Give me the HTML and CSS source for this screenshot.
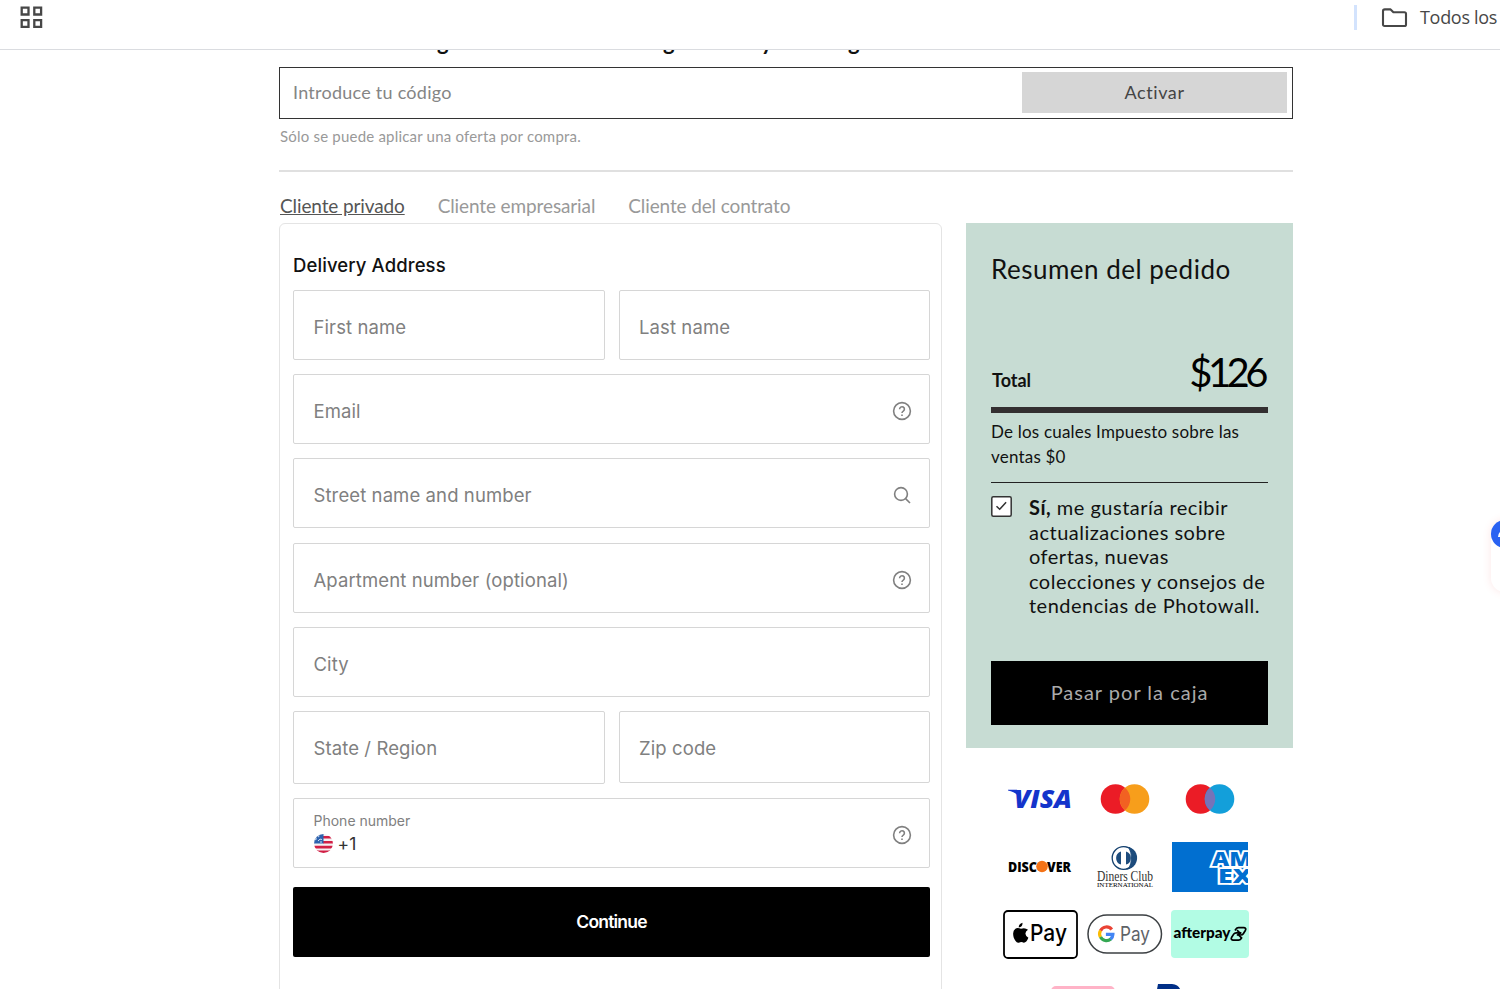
FILE: index.html
```html
<!DOCTYPE html>
<html lang="es">
<head>
    <meta charset="UTF-8">
    <meta name="viewport" content="width=device-width, initial-scale=1.0">
    <title>Photowall</title>
    <link rel="stylesheet" href="styles.css">
</head>
<body>
    <header class="bookmarks">
        <svg class="apps" width="24" height="24" viewBox="0 0 24 24" fill="none" stroke="#474747" stroke-width="2.3">
            <path d="M1.7 2.7h6.8v6.8H1.7zM14.3 2.7h6.8v6.8h-6.8zM1.7 15.1h6.8v6.8H1.7zM14.3 15.1h6.8v6.8h-6.8z"/>
        </svg>
        <div class="folder">
            <svg width="27" height="20" viewBox="0 0 27 20" fill="none" stroke="#474747" stroke-width="2.1" stroke-linejoin="round">
                <path d="M2 3.2Q2 1.4 3.8 1.4H9.6L12.4 4.2H23.4Q25 4.2 25 5.8V16.4Q25 18 23.4 18H3.6Q2 18 2 16.4Z"/>
            </svg>
            <span>Todos los</span>
        </div>
    </header>

    <main class="page">
        <div class="clipped"><span>g</span><span>g</span><span>y</span><span>g</span></div>
        <div class="code-box">
            <span class="code-input">Introduce tu código</span>
            <button class="activate">Activar</button>
        </div>
        <p class="hint">Sólo se puede aplicar una oferta por compra.</p>

        <nav class="tabs">
            <a class="active">Cliente privado</a>
            <a>Cliente empresarial</a>
            <a>Cliente del contrato</a>
        </nav>

        <div class="columns">
            <section class="address">
                <h2>Delivery Address</h2>
                <div class="fields">
                    <div class="field half">First name</div>
                    <div class="field half">Last name</div>
                    <div class="field">Email
                        <svg class="icon" viewBox="0 0 20 20"><circle cx="10" cy="10" r="8.4"/><path d="M7.6 8.2a2.4 2.4 0 1 1 3.7 2q-1.3.8-1.3 1.9"/><path d="M10 13.4v1.5"/></svg>
                    </div>
                    <div class="field">Street name and number
                        <svg class="icon" viewBox="0 0 20 20"><circle cx="9" cy="9" r="6.4"/><path d="M13.6 13.6l4.4 4.4"/></svg>
                    </div>
                    <div class="field">Apartment number (optional)
                        <svg class="icon" viewBox="0 0 20 20"><circle cx="10" cy="10" r="8.4"/><path d="M7.6 8.2a2.4 2.4 0 1 1 3.7 2q-1.3.8-1.3 1.9"/><path d="M10 13.4v1.5"/></svg>
                    </div>
                    <div class="field">City</div>
                    <div class="field half state">State / Region</div>
                    <div class="field half zip">Zip code</div>
                    <div class="field phone">
                        <div>
                            <div class="phone-label">Phone number</div>
                            <div class="phone-value">
                                <svg width="19" height="19" viewBox="0 0 19 19">
                                    <clipPath id="round"><circle cx="9.5" cy="9.5" r="9.4"/></clipPath>
                                    <g clip-path="url(#round)">
                                        <path fill="#f5f0f2" d="M0 0h19v19H0z"/>
                                        <path fill="#d21f45" d="M9 2h10v2.6H9zM9 7h10v2.6H9zM0 11.8h19v2.6H0zM0 16.6h19V19H0z"/>
                                        <path fill="#2d62ae" d="M0 0h9.5v9.6H0z"/>
                                        <path stroke="#cfdff2" stroke-width="1" fill="none" d="M1 6l2-1.5M4 3l1.5-1M4 7q2-3 4-1.5M6 8h2"/>
                                    </g>
                                </svg>
                                <span>+1</span>
                            </div>
                        </div>
                        <svg class="icon" viewBox="0 0 20 20"><circle cx="10" cy="10" r="8.4"/><path d="M7.6 8.2a2.4 2.4 0 1 1 3.7 2q-1.3.8-1.3 1.9"/><path d="M10 13.4v1.5"/></svg>
                    </div>
                </div>
                <button class="continue">Continue</button>
            </section>

            <aside>
                <div class="summary">
                    <h3>Resumen del pedido</h3>
                    <div class="total">
                        <strong>Total</strong>
                        <span class="amount">$126</span>
                    </div>
                    <p class="tax">De los cuales Impuesto sobre las<br>ventas $0</p>
                    <div class="consent">
                        <svg class="checkbox" width="21" height="21" viewBox="0 0 21 21">
                            <rect x=".8" y=".8" width="19.4" height="19.4" rx="1.5" fill="#fff" stroke="#333" stroke-width="1.5"/>
                            <path d="M5.5 10.3l3.2 3 6.4-7" fill="none" stroke="#333" stroke-width="1.5"/>
                        </svg>
                        <p><b>Sí,</b> me gustaría recibir<br>actualizaciones sobre<br>ofertas, nuevas<br>colecciones y consejos de<br>tendencias de Photowall.</p>
                    </div>
                    <button class="checkout">Pasar por la caja</button>
                </div>

                <div class="payments">
                    <div class="pay">
                        <svg width="66" height="24" viewBox="0 0 66 24">
                            <path d="M1 2.8h9l3 8-2.5-2.5Q7 4.5 1 3.6Z" fill="#1434cb"/>
                            <text class="visa" x="7" y="21" textLength="58" lengthAdjust="spacingAndGlyphs">VISA</text>
                        </svg>
                    </div>
                    <div class="pay">
                        <svg width="50" height="30" viewBox="0 0 50 30">
                            <circle cx="15.5" cy="15" r="14.8" fill="#eb1c26"/><circle cx="34.5" cy="15" r="14.8" fill="#f79e1b"/>
                            <path d="M25 3.7a14.8 14.8 0 0 1 0 22.6a14.8 14.8 0 0 1 0-22.6z" fill="#f26122"/>
                        </svg>
                    </div>
                    <div class="pay">
                        <svg width="50" height="30" viewBox="0 0 50 30">
                            <circle cx="15.5" cy="15" r="14.8" fill="#eb1c26"/><circle cx="34.5" cy="15" r="14.8" fill="#139fda"/>
                            <path d="M25 3.7a14.8 14.8 0 0 1 0 22.6a14.8 14.8 0 0 1 0-22.6z" fill="#7673b8"/>
                        </svg>
                    </div>
                    <div class="pay">
                        <svg width="64" height="16" viewBox="0 0 64 16">
                            <text class="discover" x="0" y="12.5" textLength="29" lengthAdjust="spacingAndGlyphs">DISC</text>
                            <circle cx="34" cy="7.5" r="5.8" fill="#f47216"/>
                            <text class="discover" x="39" y="12.5" textLength="24" lengthAdjust="spacingAndGlyphs">VER</text>
                        </svg>
                    </div>
                    <div class="pay">
                        <svg width="60" height="44" viewBox="0 0 60 44">
                            <circle cx="30.5" cy="13" r="11.6" fill="#1d4c7d"/>
                            <circle cx="28.5" cy="13" r="11.3" fill="#fff" stroke="#123f6d" stroke-width="1.3"/>
                            <path d="M34 2.6a11.6 11.6 0 0 1 0 20.8q5-10.400 0-20.8z" fill="#1d4c7d" stroke="#1d4c7d"/>
                            <path d="M26 6.4a6.9 6.9 0 0 0 0 13.2zM31 6.4a6.9 6.9 0 0 1 0 13.2z" fill="#1d4c7d"/>
                            <text class="diners" x="2" y="35.5" textLength="56" lengthAdjust="spacingAndGlyphs">Diners Club</text>
                            <text class="diners-small" x="2" y="42" textLength="56" lengthAdjust="spacingAndGlyphs">INTERNATIONAL</text>
                        </svg>
                    </div>
                    <div class="pay">
                        <svg width="76" height="50" viewBox="0 0 76 50">
                            <path fill="#016fd0" d="M0 0h76v50H0z"/>
                            <text class="amex" x="40" y="24" textLength="40" lengthAdjust="spacingAndGlyphs">AM</text>
                            <text class="amex" x="46" y="41" textLength="34" lengthAdjust="spacingAndGlyphs">EX</text>
                        </svg>
                    </div>
                    <div class="pay">
                        <svg width="75" height="49" viewBox="0 0 75 49">
                            <rect x="1" y="1" width="73" height="47" rx="4" fill="#fff" stroke="#000" stroke-width="1.8"/>
                            <path d="M19.5 12.8q.2 4-3.8 4.7q0-3.7 3.8-4.7zM25 19.8q-2.9 1.7-2.5 4.3q.3 2.6 2.9 3.7q-2 5-4.6 4.9q-2.5-1.2-4.9 0q-3.2.3-5.3-5.5q-1.5-6.4 1.8-8.5q2.1-1.4 5.6.1q3.9-1.7 7 1z"/>
                            <text class="apple-pay" x="27" y="31" textLength="37" lengthAdjust="spacingAndGlyphs">Pay</text>
                        </svg>
                    </div>
                    <div class="pay">
                        <svg width="76" height="40" viewBox="0 0 76 40">
                            <rect x="1" y="1" width="73.5" height="38" rx="19" fill="#fff" stroke="#3c4043" stroke-width="1.5"/>
                            <g fill="none" stroke-width="3.2">
                                <path d="M24.8 15.5a6.7 6.7 0 0 0-11.3 1.2" stroke="#ea4335"/>
                                <path d="M13.5 16.5a6.7 6.7 0 0 0 0 6.6" stroke="#fbbc04"/>
                                <path d="M13.5 23a6.7 6.7 0 0 0 10.3 2" stroke="#34a853"/>
                                <path d="M23.6 25.2a6.7 6.7 0 0 0 2.3-4.8h-7" stroke="#4285f4"/>
                            </g>
                            <text class="google-pay" x="33" y="26.5" textLength="30" lengthAdjust="spacingAndGlyphs">Pay</text>
                        </svg>
                    </div>
                    <div class="pay">
                        <svg width="78" height="48" viewBox="0 0 78 48">
                            <rect width="78" height="48" rx="4" fill="#b2fce4"/>
                            <text class="afterpay" x="2.5" y="28" textLength="57" lengthAdjust="spacingAndGlyphs">afterpay</text>
                            <g fill="none" stroke="#000" stroke-width="1.7">
                                <path d="M64 20.500l1-1.500q.8-1.300 2.500-1.300h5.500q2.700.4 1.300 2.800l-2 3.200q-.8 1.300-2.500 1.300h-2"/>
                                <path d="M71 27.300l-1 1.500q-.8 1.300-2.500 1.300h-5.500q-2.700-.4-1.300-2.800l2-3.200q.8-1.300 2.500-1.300h3"/>
                                <path d="M70.300 22.300l-2.700 2.700 2.700 2.600M66 20.200l2.700 2.600-2.700 2.700"/>
                            </g>
                        </svg>
                    </div>
                    <div class="pay">
                        <svg width="64" height="32" viewBox="0 0 64 32"><rect width="64" height="32" rx="5" fill="#ffb3c7"/></svg>
                    </div>
                    <div class="pay">
                        <svg width="32" height="36" viewBox="0 0 32 36"><path d="M6 0H20Q29 1 29 10Q27 20 16 20H11L8 32H0Z" fill="#012f87"/></svg>
                    </div>
                </div>
            </aside>
        </div>
    </main>

    <div class="chat">
        <svg width="28" height="28" viewBox="0 0 28 28"><circle cx="14" cy="14" r="14" fill="#2962f2"/><path d="M7 17q0-6 7-7v7z" fill="#fff"/></svg>
    </div>
</body>
</html>
```
FILE: styles.css
```css
* {
    box-sizing: border-box;
}
body {
    margin: 0;
    height: 989px;
    overflow: hidden;
    background-color: #fff;
    font-family: Lato, "Open Sans", sans-serif;
    color: #222;
}
h2, h3, p {
    margin: 0;
    font-weight: 400;
}
button {
    border: none;
    padding: 0;
    font-family: inherit;
    cursor: pointer;
}
svg {
    display: block;
    flex: none;
}
.bookmarks {
    height: 50px;
    padding: 5px 0 0 20px;
    border-bottom: 1px solid #dadce0;
    display: flex;
    justify-content: space-between;
    align-items: flex-start;
}
.folder {
    width: 146px;
    height: 25px;
    padding-left: 24px;
    border-left: 3px solid #d3e3fd;
    display: flex;
    align-items: center;
    gap: 12px;
    font: 18px "Open Sans", sans-serif;
    line-height: 22px;
    letter-spacing: -0.3px;
    color: #474747;
    white-space: nowrap;
}
.folder span {
    padding-bottom: 2px;
}
.page {
    width: 1014px;
    margin-left: 279px;
}
.clipped {
    height: 17px;
    padding-left: 158px;
    display: flex;
    overflow: hidden;
    font-size: 22px;
    font-weight: 700;
    line-height: 26px;
    color: #111;
}
.clipped span {
    width: 226px;
    height: 26px;
    margin-top: -21px;
}
.clipped span:nth-child(2) {
    width: 98px;
}
.clipped span:nth-child(3) {
    width: 87px;
}
.code-box {
    height: 52px;
    padding: 4px 5px 5px 13px;
    border: 1.5px solid #333;
    display: flex;
    justify-content: space-between;
    align-items: center;
}
.code-input {
    padding-bottom: 2px;
    font-size: 18px;
    letter-spacing: 0.25px;
    color: #858585;
}
.activate {
    width: 265px;
    height: 41px;
    padding-bottom: 2px;
    background-color: #d6d6d6;
    font-size: 18px;
    letter-spacing: 0.6px;
    color: #444;
}
.hint {
    padding: 7px 0 0 1px;
    height: 53px;
    border-bottom: 2px solid #e0e0e0;
    font-size: 15px;
    line-height: 20px;
    letter-spacing: 0.2px;
    color: #999;
}
.tabs {
    height: 51px;
    padding: 22px 0 0 1px;
    display: flex;
    gap: 33px;
    font-size: 19px;
    line-height: 24px;
    letter-spacing: -0.12px;
    color: #999;
}
.tabs .active {
    color: #555;
    text-decoration: underline;
}
.columns {
    display: flex;
    gap: 24px;
}
.address {
    width: 663px;
    height: 800px;
    padding: 28px 11px 0 13px;
    border: 1px solid #e4e4e4;
    border-radius: 6px;
    font-family: Inter, sans-serif;
}
.address h2 {
    height: 38px;
    font-size: 18.5px;
    font-weight: 500;
    line-height: 26px;
    letter-spacing: 0.1px;
    color: #111;
}
.fields {
    display: grid;
    grid-template-columns: 1fr 1fr;
    gap: 14.2px 14px;
    align-items: start;
}
.field {
    grid-column: span 2;
    height: 70px;
    padding: 4px 17px 0 19.5px;
    border: 1.5px solid #d6d6d6;
    border-radius: 2px;
    display: flex;
    justify-content: space-between;
    align-items: center;
    font-size: 18.5px;
    letter-spacing: 0.1px;
    color: #808080;
}
.half {
    grid-column: span 1;
}
.state {
    height: 73px;
    padding-top: 1px;
}
.zip {
    height: 72px;
    padding-top: 2px;
}
.icon {
    width: 20px;
    height: 20px;
    fill: none;
    stroke: #808080;
    stroke-width: 1.6;
}
.phone-label {
    font-size: 14px;
    line-height: 16px;
    letter-spacing: 0;
}
.phone-value {
    display: flex;
    align-items: center;
    gap: 5px;
    height: 28px;
    font-size: 17.5px;
    color: #333;
}
.continue {
    width: 100%;
    height: 70px;
    margin-top: 19px;
    padding-bottom: 2px;
    background-color: #000;
    border-radius: 2px;
    font-size: 17.5px;
    font-weight: 600;
    letter-spacing: -0.8px;
    color: #fff;
}
.summary {
    width: 327px;
    height: 525px;
    padding: 30px 25px 0;
    background-color: #c7dcd3;
    color: #111;
}
.summary h3 {
    font-size: 26px;
    line-height: 32px;
    letter-spacing: 0.5px;
}
.total {
    height: 128px;
    border-bottom: 6px solid #332f30;
    display: flex;
    justify-content: space-between;
    align-items: baseline;
    padding-top: 62px;
}
.total strong {
    padding-left: 1px;
    font-size: 18px;
}
.amount {
    margin-right: 4px;
    font-size: 40px;
    line-height: 50px;
    letter-spacing: -4.5px;
    color: #000;
}
.tax {
    height: 70px;
    padding-top: 6px;
    border-bottom: 1px solid #222;
    font-size: 17px;
    line-height: 25px;
    letter-spacing: 0.2px;
}
.consent {
    padding-top: 13px;
    height: 178px;
    display: flex;
    gap: 17px;
    font-size: 20px;
    line-height: 24.5px;
    letter-spacing: 0.5px;
    white-space: nowrap;
}
.consent p {
    margin-top: -1px;
}
.checkout {
    width: 100%;
    height: 64px;
    padding-bottom: 2px;
    background-color: #000;
    font-size: 20px;
    letter-spacing: 1px;
    color: #aaa;
}
.payments {
    width: 256px;
    margin: 17px 0 0 31px;
    display: flex;
    flex-wrap: wrap;
    justify-content: center;
}
.pay {
    width: 85px;
    height: 67.8px;
    display: flex;
    justify-content: center;
    align-items: center;
}
.visa {
    font: italic 800 25px "Open Sans", sans-serif;
    fill: #1434cb;
}
.discover {
    font: 800 14px "Open Sans", sans-serif;
}
.diners {
    font: 14px "Liberation Serif", serif;
    fill: #333;
}
.diners-small {
    font: 6px "Liberation Serif", serif;
}
.amex {
    font: 800 19px "Open Sans", sans-serif;
    fill: #016fd0;
    stroke: #fff;
    stroke-width: 3.5px;
    paint-order: stroke;
}
.apple-pay {
    font: 500 23px Inter, sans-serif;
}
.google-pay {
    font: 20px Inter, sans-serif;
    fill: #5f6368;
}
.afterpay {
    font: 900 15px Lato, sans-serif;
}
/* floating widget at the right edge of the window */
.chat {
    position: absolute;
    top: 520px;
    right: -19px;
    width: 28px;
    height: 72px;
    border-radius: 14px;
    box-shadow: 0 0 10px #fce6e6;
}
```
